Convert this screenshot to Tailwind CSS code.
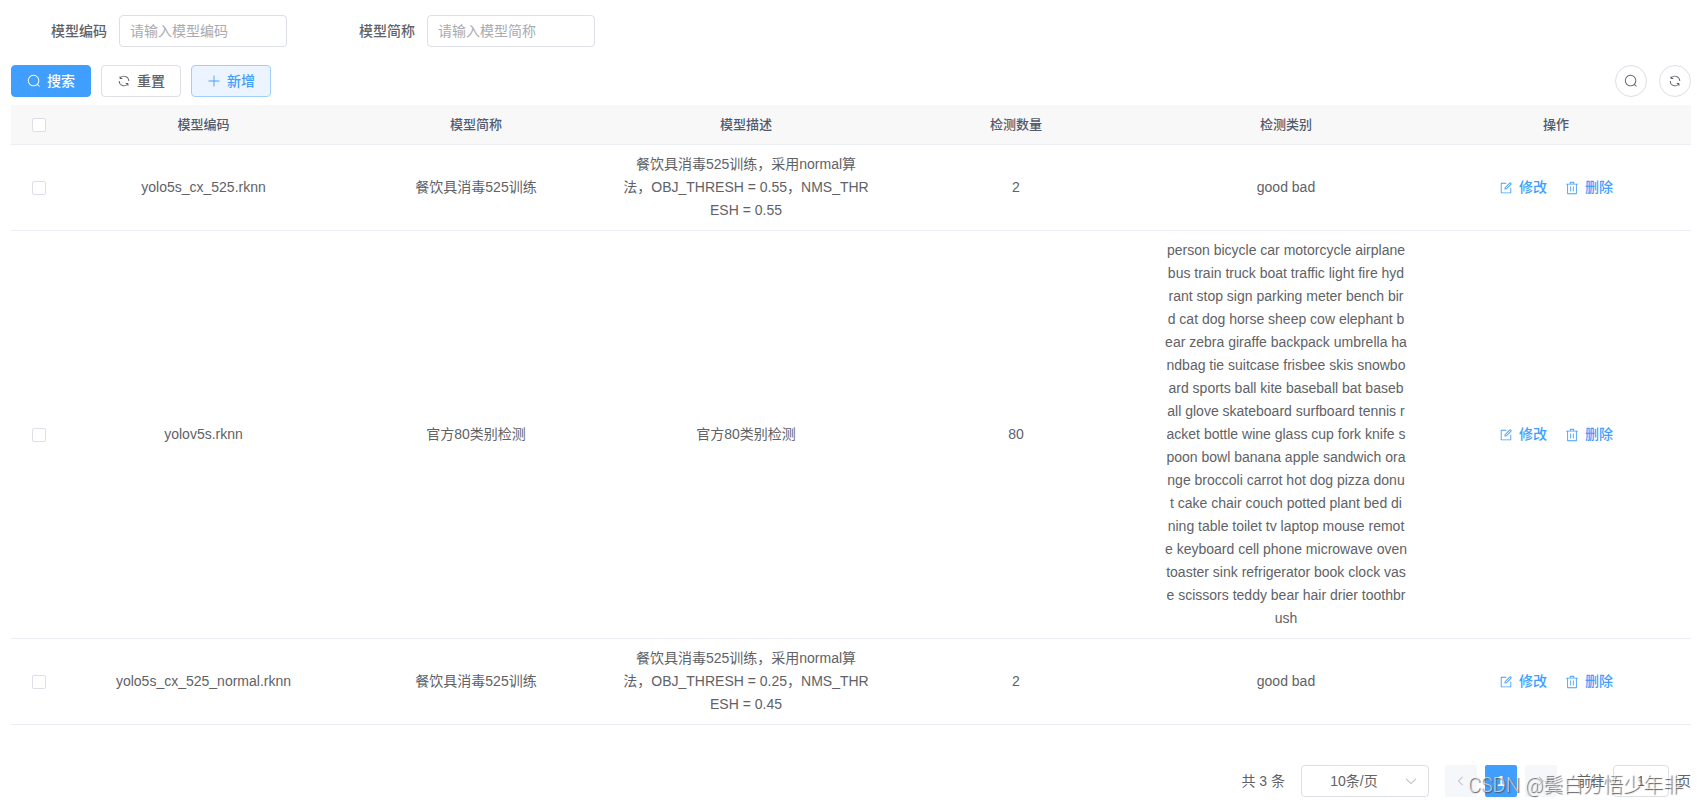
<!DOCTYPE html>
<html lang="zh-CN">
<head>
<meta charset="utf-8">
<meta name="viewport" content="width=device-width, initial-scale=1">
<title>模型管理</title>
<script src="https://cdn.jsdelivr.net/npm/@tailwindcss/browser@4"></script>
</head>
<body class="bg-white font-['Liberation_Sans','Noto_Sans_CJK_SC',sans-serif] text-sm text-[#606266]">
<svg class="hidden" aria-hidden="true">
  <symbol id="search" viewBox="0 0 1024 1024"><path d="m795.904 750.72 124.992 124.928a32 32 0 0 1-45.248 45.248L750.656 795.904a416 416 0 1 1 45.248-45.248zM480 832a352 352 0 1 0 0-704 352 352 0 0 0 0 704z"/></symbol>
  <symbol id="refresh" viewBox="0 0 1024 1024"><path d="M771.776 794.88A384 384 0 0 1 128 512h64a320 320 0 0 0 555.712 216.448H654.72a32 32 0 1 1 0-64h149.056a32 32 0 0 1 32 32v148.928a32 32 0 1 1-64 0v-50.56zM276.288 295.616h92.992a32 32 0 0 1 0 64H220.16a32 32 0 0 1-32-32V178.56a32 32 0 0 1 64 0v50.56A384 384 0 0 1 896.128 512h-64a320 320 0 0 0-555.776-216.384z"/></symbol>
  <symbol id="plus" viewBox="0 0 1024 1024"><path d="M480 480V128a32 32 0 0 1 64 0v352h352a32 32 0 1 1 0 64H544v352a32 32 0 1 1-64 0V544H128a32 32 0 0 1 0-64h352z"/></symbol>
  <symbol id="edit" viewBox="0 0 1024 1024"><path d="M832 512a32 32 0 1 1 64 0v352a32 32 0 0 1-32 32H160a32 32 0 0 1-32-32V160a32 32 0 0 1 32-32h352a32 32 0 0 1 0 64H192v640h640V512z"/><path d="m469.952 554.24 52.8-7.552L847.104 222.4a32 32 0 1 0-45.248-45.248L477.44 501.44l-7.552 52.8zm422.4-422.4a96 96 0 0 1 0 135.808l-331.84 331.84a32 32 0 0 1-18.112 9.088L436.8 623.68a32 32 0 0 1-36.224-36.224l15.104-105.6a32 32 0 0 1 9.024-18.112l331.904-331.84a96 96 0 0 1 135.744 0z"/></symbol>
  <symbol id="trash" viewBox="0 0 1024 1024"><path d="M160 256H96a32 32 0 0 1 0-64h256V95.936a32 32 0 0 1 32-32h256a32 32 0 0 1 32 32V192h256a32 32 0 1 1 0 64h-64v672a32 32 0 0 1-32 32H192a32 32 0 0 1-32-32V256zm448-64v-64H416v64h192zM224 896h576V256H224v640zm192-128a32 32 0 0 1-32-32V416a32 32 0 0 1 64 0v320a32 32 0 0 1-32 32zm192 0a32 32 0 0 1-32-32V416a32 32 0 0 1 64 0v320a32 32 0 0 1-32 32z"/></symbol>
  <symbol id="down" viewBox="0 0 1024 1024"><path d="M831.872 340.864 512 652.672 192.128 340.864a30.592 30.592 0 0 0-42.752 0 29.12 29.12 0 0 0 0 41.6L489.664 714.24a32 32 0 0 0 44.672 0l340.288-331.712a29.12 29.12 0 0 0 0-41.728 30.592 30.592 0 0 0-42.752 0z"/></symbol>
  <symbol id="left" viewBox="0 0 1024 1024"><path d="M609.408 149.376 277.76 489.6a32 32 0 0 0 0 44.672l331.648 340.352a29.12 29.12 0 0 0 41.728 0 30.592 30.592 0 0 0 0-42.752L339.264 511.936l311.872-319.872a30.592 30.592 0 0 0 0-42.688 29.12 29.12 0 0 0-41.728 0z"/></symbol>
  <symbol id="right" viewBox="0 0 1024 1024"><path d="M340.864 149.312a30.592 30.592 0 0 0 0 42.752L652.736 512 340.864 831.872a30.592 30.592 0 0 0 0 42.752 29.12 29.12 0 0 0 41.728 0L714.24 534.336a32 32 0 0 0 0-44.672L382.592 149.376a29.12 29.12 0 0 0-41.728 0z"/></symbol>
</svg>
<main class="relative pt-[15px] pr-[7px] pb-2 pl-[11px]">
  <form class="flex">
    <div class="flex items-center gap-3 pl-10">
      <label for="code" class="font-medium">模型编码</label>
      <input id="code" type="text" placeholder="请输入模型编码" class="h-8 w-[168px] rounded border border-[#dcdfe6] px-[10px] outline-none placeholder:text-[#a8abb2]">
    </div>
    <div class="flex items-center gap-3 pl-[72px]">
      <label for="abbr" class="font-medium">模型简称</label>
      <input id="abbr" type="text" placeholder="请输入模型简称" class="h-8 w-[168px] rounded border border-[#dcdfe6] px-[10px] outline-none placeholder:text-[#a8abb2]">
    </div>
  </form>

  <div class="mt-[18px] flex items-center justify-between">
    <div class="flex gap-[10px] font-medium">
      <button type="button" class="flex h-8 w-20 items-center justify-center gap-[6px] rounded border border-[#409eff] bg-[#409eff] text-white"><svg class="size-[14px] fill-current"><use href="#search"/></svg>搜索</button>
      <button type="button" class="flex h-8 w-20 items-center justify-center gap-[6px] rounded border border-[#dcdfe6] bg-white"><svg class="size-[14px] fill-current"><use href="#refresh"/></svg>重置</button>
      <button type="button" class="flex h-8 w-20 items-center justify-center gap-[6px] rounded border border-[#a0cfff] bg-[#ecf5ff] text-[#409eff]"><svg class="size-[14px] fill-current"><use href="#plus"/></svg>新增</button>
    </div>
    <div class="flex gap-3">
      <button type="button" aria-label="搜索" class="flex size-8 items-center justify-center rounded-full border border-[#dcdfe6]"><svg class="size-[14px] fill-current"><use href="#search"/></svg></button>
      <button type="button" aria-label="刷新" class="flex size-8 items-center justify-center rounded-full border border-[#dcdfe6]"><svg class="size-[14px] fill-current"><use href="#refresh"/></svg></button>
    </div>
  </div>

  <table class="mt-2 w-full table-fixed border-separate border-spacing-0 text-center leading-[23px] [&_td]:border-b [&_td]:border-[#ebeef5] [&_td]:px-3 [&_td]:py-2 [&_td]:break-all [&_th]:h-10 [&_th]:border-b [&_th]:border-[#ebeef5] [&_th]:bg-[#f8f8f9] [&_th]:px-3">
    <colgroup><col class="w-[55px]"><col class="w-[275px]"><col><col><col><col><col></colgroup>
    <thead class="text-[13px] text-[#515a6e] [&_th]:font-medium">
      <tr>
        <th><input type="checkbox" aria-label="全选" class="mx-auto block size-[14px] appearance-none rounded-xs border border-[#dcdfe6] bg-white"></th>
        <th>模型编码</th><th>模型简称</th><th>模型描述</th><th>检测数量</th><th>检测类别</th><th>操作</th>
      </tr>
    </thead>
    <tbody>
      <tr>
        <td><input type="checkbox" aria-label="选择 yolo5s_cx_525.rknn" class="mx-auto block size-[14px] appearance-none rounded-xs border border-[#dcdfe6] bg-white"></td>
        <td>yolo5s_cx_525.rknn</td>
        <td>餐饮具消毒525训练</td>
        <td>餐饮具消毒525训练，采用normal算<br>法，OBJ_THRESH = 0.55，NMS_THR<br>ESH = 0.55</td>
        <td>2</td>
        <td>good bad</td>
        <td>
          <div class="flex justify-center gap-[18px] font-medium text-[#409eff]">
            <button type="button" class="flex items-center gap-[6px]"><svg class="size-[14px] fill-current"><use href="#edit"/></svg>修改</button>
            <button type="button" class="flex items-center gap-[6px]"><svg class="size-[14px] fill-current"><use href="#trash"/></svg>删除</button>
          </div>
        </td>
      </tr>
      <tr>
        <td><input type="checkbox" aria-label="选择 yolov5s.rknn" class="mx-auto block size-[14px] appearance-none rounded-xs border border-[#dcdfe6] bg-white"></td>
        <td>yolov5s.rknn</td>
        <td>官方80类别检测</td>
        <td>官方80类别检测</td>
        <td>80</td>
        <td>person bicycle car motorcycle airplane<br>bus train truck boat traffic light fire hyd<br>rant stop sign parking meter bench bir<br>d cat dog horse sheep cow elephant b<br>ear zebra giraffe backpack umbrella ha<br>ndbag tie suitcase frisbee skis snowbo<br>ard sports ball kite baseball bat baseb<br>all glove skateboard surfboard tennis r<br>acket bottle wine glass cup fork knife s<br>poon bowl banana apple sandwich ora<br>nge broccoli carrot hot dog pizza donu<br>t cake chair couch potted plant bed di<br>ning table toilet tv laptop mouse remot<br>e keyboard cell phone microwave oven<br>toaster sink refrigerator book clock vas<br>e scissors teddy bear hair drier toothbr<br>ush</td>
        <td>
          <div class="flex justify-center gap-[18px] font-medium text-[#409eff]">
            <button type="button" class="flex items-center gap-[6px]"><svg class="size-[14px] fill-current"><use href="#edit"/></svg>修改</button>
            <button type="button" class="flex items-center gap-[6px]"><svg class="size-[14px] fill-current"><use href="#trash"/></svg>删除</button>
          </div>
        </td>
      </tr>
      <tr>
        <td><input type="checkbox" aria-label="选择 yolo5s_cx_525_normal.rknn" class="mx-auto block size-[14px] appearance-none rounded-xs border border-[#dcdfe6] bg-white"></td>
        <td>yolo5s_cx_525_normal.rknn</td>
        <td>餐饮具消毒525训练</td>
        <td>餐饮具消毒525训练，采用normal算<br>法，OBJ_THRESH = 0.25，NMS_THR<br>ESH = 0.45</td>
        <td>2</td>
        <td>good bad</td>
        <td>
          <div class="flex justify-center gap-[18px] font-medium text-[#409eff]">
            <button type="button" class="flex items-center gap-[6px]"><svg class="size-[14px] fill-current"><use href="#edit"/></svg>修改</button>
            <button type="button" class="flex items-center gap-[6px]"><svg class="size-[14px] fill-current"><use href="#trash"/></svg>删除</button>
          </div>
        </td>
      </tr>
    </tbody>
  </table>

  <nav aria-label="分页" class="mt-10 flex items-center justify-end">
    <span class="mr-4">共 3 条</span>
    <div class="relative mr-4">
      <select aria-label="每页条数" class="h-8 w-32 appearance-none rounded border border-[#dcdfe6] bg-white pr-[22px] text-center outline-none"><option>10条/页</option><option>20条/页</option></select>
      <svg class="pointer-events-none absolute top-[9px] right-[11px] size-[14px] fill-[#a8abb2]"><use href="#down"/></svg>
    </div>
    <div class="flex gap-2">
      <button type="button" aria-label="上一页" disabled class="flex size-8 items-center justify-center rounded-xs bg-[#f5f7fa] text-[#a8abb2]"><svg class="size-3 fill-current"><use href="#left"/></svg></button>
      <button type="button" aria-current="page" class="size-8 rounded-xs bg-[#409eff] font-bold text-white">1</button>
      <button type="button" aria-label="下一页" disabled class="flex size-8 items-center justify-center rounded-xs bg-[#f5f7fa] text-[#a8abb2]"><svg class="size-3 fill-current"><use href="#right"/></svg></button>
    </div>
    <label for="jump" class="ml-5 mr-2">前往</label>
    <input id="jump" type="text" value="1" class="h-8 w-14 rounded border border-[#dcdfe6] text-center outline-none">
    <span class="ml-2">页</span>
  </nav>
  <p class="pointer-events-none absolute right-[15px] bottom-2 font-['Roboto','Noto_Sans_CJK_SC',sans-serif] text-[20px] leading-6 font-light text-white/60 [text-shadow:1px_1px_1px_#555]">CSDN @鬓白方悟少年非</p>
</main>
</body>
</html>
